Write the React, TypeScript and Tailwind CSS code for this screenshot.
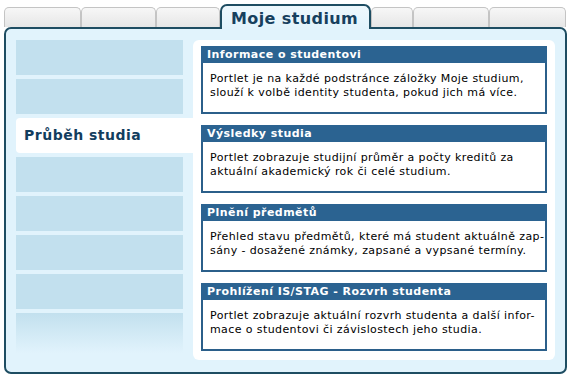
import React from 'react';

type Portlet = {
  title: string;
  lines: string[];
};

const portlets: Portlet[] = [
  {
    title: 'Informace o studentovi',
    lines: [
      'Portlet je na každé podstránce záložky Moje studium,',
      'slouží k volbě identity studenta, pokud jich má více.',
    ],
  },
  {
    title: 'Výsledky studia',
    lines: [
      'Portlet zobrazuje studijní průměr a počty kreditů za',
      'aktuální akademický rok či celé studium.',
    ],
  },
  {
    title: 'Plnění předmětů',
    lines: [
      'Přehled stavu předmětů, které má student aktuálně zap-',
      'sány - dosažené známky, zapsané a vypsané termíny.',
    ],
  },
  {
    title: 'Prohlížení IS/STAG - Rozvrh studenta',
    lines: [
      'Portlet zobrazuje aktuální rozvrh studenta a další infor-',
      'mace o studentovi či závislostech jeho studia.',
    ],
  },
];

function Tab({ width }: { width: string }) {
  return (
    <div
      className={`${width} h-[20px] rounded-t-[5px] border border-b-0 border-[#c4c4c4] bg-gradient-to-b from-[#f7f7f7] to-[#e6e6e6]`}
    />
  );
}

export default function App() {
  return (
    <div className="w-[571px] h-[380px] bg-white font-['DejaVu_Sans',Verdana,sans-serif] overflow-hidden">
      {/* tab strip */}
      <div className="relative z-10 flex items-end h-[27px] pl-[4px]">
        <Tab width="w-[77px]" />
        <Tab width="w-[75px]" />
        <Tab width="w-[64px]" />
        <div className="w-[151px] h-[25px] -mb-[2px] rounded-t-[7px] border-2 border-b-0 border-[#1e4d62] bg-gradient-to-b from-[#eef8fd] to-[#e1f3fc] pl-[9px] pt-[1px]">
          <span className="text-[16px] leading-[20px] tracking-[0.4px] font-bold text-[#17405e]">Moje studium</span>
        </div>
        <Tab width="w-[42px]" />
        <Tab width="w-[76px]" />
        <Tab width="w-[77px]" />
      </div>

      {/* main panel */}
      <div className="ml-[4px] w-[563px] h-[347px] rounded-[7px] border-2 border-[#1e4d62] bg-[#e1f3fc] pl-[10px] pr-[10px] pt-[11px]">
        <div className="flex">
          <div className="flex flex-col gap-[4px] w-[177px]">
            <div className="w-[167px] h-[35px] bg-[#c2e0ee]" />
            <div className="w-[167px] h-[35px] bg-[#c2e0ee]" />
            <div className="w-[177px] h-[35px] bg-white rounded-l-[4px] pl-[8px] flex items-center">
              <span className="text-[14px] tracking-[0.5px] font-bold text-[#123d5e]">Průběh studia</span>
            </div>
            <div className="w-[167px] h-[35px] bg-[#c2e0ee]" />
            <div className="w-[167px] h-[35px] bg-[#c2e0ee]" />
            <div className="w-[167px] h-[35px] bg-[#c2e0ee]" />
            <div className="w-[167px] h-[35px] bg-[#c2e0ee]" />
            <div className="w-[167px] h-[40px] bg-gradient-to-b from-[#c2e0ee] to-[#e1f3fc]" />
          </div>

          <div className="w-[362px] h-[320px] bg-white rounded-[6px] px-[8px] pt-[6px] flex flex-col gap-[11px]">
            {portlets.map((p) => (
              <div key={p.title} className="h-[68px] flex flex-col">
                <div className="h-[17px] bg-[#2b6391] pl-[6px] text-[11px] leading-[17px] tracking-[0.45px] font-bold text-white">
                  {p.title}
                </div>
                <div className="flex-1 border-2 border-t-0 border-[#2b5f8a] pl-[7px] pt-[9px] text-[11px] leading-[14px] tracking-[0.4px] text-black">
                  {p.lines.map((l) => (
                    <div key={l}>{l}</div>
                  ))}
                </div>
              </div>
            ))}
          </div>
        </div>
      </div>
    </div>
  );
}
